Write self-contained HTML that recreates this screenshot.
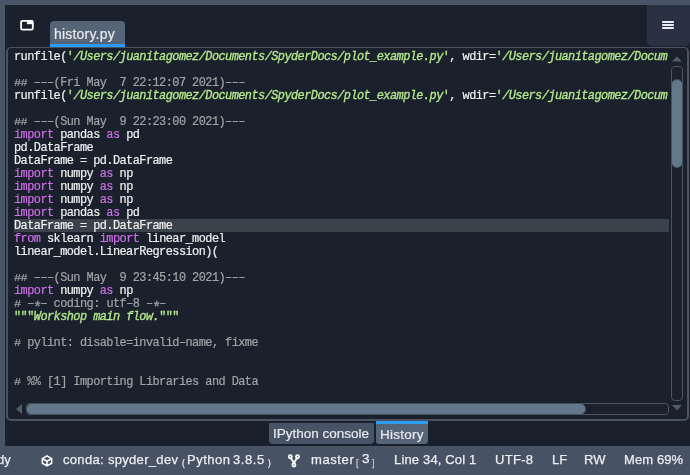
<!DOCTYPE html>
<html><head><meta charset="utf-8">
<style>
*{margin:0;padding:0;box-sizing:border-box}
html,body{width:690px;height:475px;overflow:hidden;background:#1a212c;position:relative}
#code,.sans,.st{will-change:transform}
.abs{position:absolute}
#topstrip{left:0;top:0;width:690px;height:5px;background:#4a5467}
#leftstrip{left:0;top:0;width:5px;height:475px;background:#4a5467}
#status{left:0;top:446px;width:690px;height:29px;background:#475265}
#menubtn{left:647px;top:5px;width:43px;height:41px;background:#293142;border-radius:0 0 5px 5px}
#tab1{left:50px;top:21px;width:75px;height:26px;background:#566477;border-radius:4px 4px 0 0;border-bottom:3px solid #2a9df0}
.sans{font-family:"Liberation Sans",sans-serif;color:#e8eaed;-webkit-text-stroke:0.2px currentColor}
#panel{left:6px;top:47px;width:683px;height:374px;border-style:solid;border-color:#4a5362;border-width:1.5px 2px 2px 2px;border-radius:5px}
#code{left:14px;top:50.7px;font-family:"Liberation Mono",monospace;font-size:11.9px;letter-spacing:-0.54px;line-height:13px;-webkit-text-stroke:0.2px currentColor;color:#f0f0f0;white-space:pre}
#hl{left:14px;top:219px;width:655px;height:13px;background:#3a424b}
.k{color:#cc6fe6}.s2{color:#b4e88c;-webkit-text-stroke:0.3px currentColor}.hs{display:inline-block;transform:scaleY(0.88);transform-origin:50% 85%}.ast{display:inline-block;transform:translateY(4px) scale(1.3)}.s{color:#b4e88c;font-style:italic;-webkit-text-stroke:0.3px currentColor}.c{color:#a2a3a6}
#vtrack{left:671px;top:66px;width:12px;height:335px;border:1px solid #4a5463;border-radius:4px}
#vhandle{left:670.7px;top:78.5px;width:12.6px;height:89.5px;background:#64788b;border:1.5px solid #48525f;border-radius:6px}
#htrack{left:26px;top:403px;width:643px;height:12px;border:1px solid #4a5463;border-radius:4px}
#hhandle{left:25.5px;top:402.7px;width:560px;height:12.5px;background:#64788b;border:1.5px solid #48525f;border-radius:6px}
#tabc{left:269px;top:423px;width:105px;height:21px;background:#475366;border-radius:0 0 4px 4px}
#tabh{left:376px;top:421px;width:52px;height:23px;background:#566477;border-top:3px solid #2a9df0;border-radius:0 0 3px 3px}
.st{position:absolute;top:451.5px;font-size:13px;line-height:16px;color:#eceef1;-webkit-text-stroke:0.25px currentColor;font-family:"Liberation Sans",sans-serif;white-space:pre}
</style></head><body>
<div class="abs" id="topstrip"></div>
<div class="abs" id="leftstrip"></div>
<div class="abs" id="menubtn"></div>
<svg class="abs" style="left:0;top:0" width="690" height="475" viewBox="0 0 690 475">
  <!-- window icon -->
  <rect x="21.1" y="20.8" width="11.7" height="8.8" rx="1.3" fill="none" stroke="#ffffff" stroke-width="1.8"/>
  <rect x="26.9" y="20.5" width="5.9" height="3.7" fill="#ffffff"/>
  <!-- hamburger -->
  <rect x="662" y="21" width="12" height="2" rx="0.8" fill="#e8ecf2"/>
  <rect x="662" y="24" width="12" height="2" rx="0.8" fill="#e8ecf2"/>
  <rect x="662" y="27" width="12" height="2" rx="0.8" fill="#e8ecf2"/>
</svg>
<div class="abs" id="tab1"></div>
<div class="abs sans" style="left:54px;top:26px;font-size:14px;line-height:16px;letter-spacing:0.2px">history.py</div>
<div class="abs" id="panel"></div>
<div class="abs" id="hl"></div>
<div class="abs" id="code">runfile(<span class="s2">'</span><span class="s">/Users/juanitagomez/Documents/SpyderDocs/plot_example.py</span><span class="s2">'</span>, wdir=<span class="s2">'</span><span class="s">/Users/juanitagomez/Docum</span>

<span class="c"><span class="hs">##</span> –––(Fri May  7 22:12:07 2021)–––</span>
runfile(<span class="s2">'</span><span class="s">/Users/juanitagomez/Documents/SpyderDocs/plot_example.py</span><span class="s2">'</span>, wdir=<span class="s2">'</span><span class="s">/Users/juanitagomez/Docum</span>

<span class="c"><span class="hs">##</span> –––(Sun May  9 22:23:00 2021)–––</span>
<span class="k">import</span> pandas <span class="k">as</span> pd
pd.DataFrame
DataFrame = pd.DataFrame
<span class="k">import</span> numpy <span class="k">as</span> np
<span class="k">import</span> numpy <span class="k">as</span> np
<span class="k">import</span> numpy <span class="k">as</span> np
<span class="k">import</span> pandas <span class="k">as</span> pd
DataFrame = pd.DataFrame
<span class="k">from</span> sklearn <span class="k">import</span> linear_model
linear_model.LinearRegression)(

<span class="c"><span class="hs">##</span> –––(Sun May  9 23:45:10 2021)–––</span>
<span class="k">import</span> numpy <span class="k">as</span> np
<span class="c"><span class="hs">#</span> –<span class="ast">*</span>– coding: utf–8 –<span class="ast">*</span>–</span>
<span class="s2">"""</span><span class="s">Workshop main flow.</span><span class="s2">"""</span>

<span class="c"><span class="hs">#</span> pylint: disable=invalid–name, fixme</span>


<span class="c"><span class="hs">#</span> %% [1] Importing Libraries and Data</span></div>
<svg class="abs" style="left:0;top:0" width="690" height="475" viewBox="0 0 690 475">
  <polygon points="672,61.5 682,61.5 677,56.5" fill="#535c6b"/>
  <polygon points="672,405 682,405 677,410.5" fill="#535c6b"/>
  <polygon points="22,404 22,414 16,409" fill="#535c6b"/>
</svg>
<div class="abs" id="vtrack"></div>
<div class="abs" id="vhandle"></div>
<div class="abs" id="htrack"></div>
<div class="abs" id="hhandle"></div>
<div class="abs" id="status"></div>
<div class="abs" id="tabc"></div>
<div class="abs sans" style="left:273px;top:426px;font-size:13.5px;line-height:16px">IPython console</div>
<div class="abs" id="tabh"></div>
<div class="abs sans" style="left:380px;top:426.5px;font-size:13.5px;line-height:16px;letter-spacing:0.25px">History</div>
<div class="st" style="left:-3px">dy</div>
<svg class="abs" style="left:40px;top:454px" width="14" height="14" viewBox="0 0 14 14">
  <path d="M7 1.85 L11.65 4.55 L11.65 9.25 L7 11.95 L2.35 9.25 L2.35 4.55 Z M2.35 4.55 L7 7.25 L11.65 4.55 M7 7.25 L7 11.95" fill="none" stroke="#fff" stroke-width="1.5" stroke-linejoin="round"/>
</svg>
<div class="st" style="left:63px;letter-spacing:0.32px">conda: spyder_dev</div>
<div class="st" style="left:181.8px;top:455.6px;font-size:8.2px">(</div>
<div class="st" style="left:187px;letter-spacing:0.5px">Python</div>
<div class="st" style="left:232.5px;letter-spacing:0.55px">3.8.5</div>
<div class="st" style="left:268px;top:455.6px;font-size:8.2px">)</div>
<svg class="abs" style="left:284px;top:450px" width="20" height="20" viewBox="0 0 20 20">
  <path d="M7 8.3 L9.9 13 L12.8 8.3" fill="none" stroke="#fff" stroke-width="1.7" stroke-linejoin="round"/>
  <circle cx="6.3" cy="6.7" r="1.55" fill="none" stroke="#fff" stroke-width="1.8"/><circle cx="13.5" cy="6.7" r="1.55" fill="none" stroke="#fff" stroke-width="1.8"/><circle cx="9.9" cy="15" r="1.55" fill="none" stroke="#fff" stroke-width="1.8"/>
</svg>
<div class="st" style="left:310.5px;letter-spacing:0.6px">master</div>
<div class="st" style="left:356px;top:455px;font-size:9px;color:#c8ccd2">[</div>
<div class="st" style="left:361.5px;top:451px;font-size:13.6px">3</div>
<div class="st" style="left:371.5px;top:455px;font-size:9px;color:#c8ccd2">]</div>
<div class="st" style="left:393.5px;letter-spacing:0.16px">Line 34, Col 1</div>
<div class="st" style="left:495px;letter-spacing:0.3px">UTF-8</div>
<div class="st" style="left:551.5px">LF</div>
<div class="st" style="left:583.5px">RW</div>
<div class="st" style="left:624px;letter-spacing:0.1px">Mem 69%</div>
</body></html>
